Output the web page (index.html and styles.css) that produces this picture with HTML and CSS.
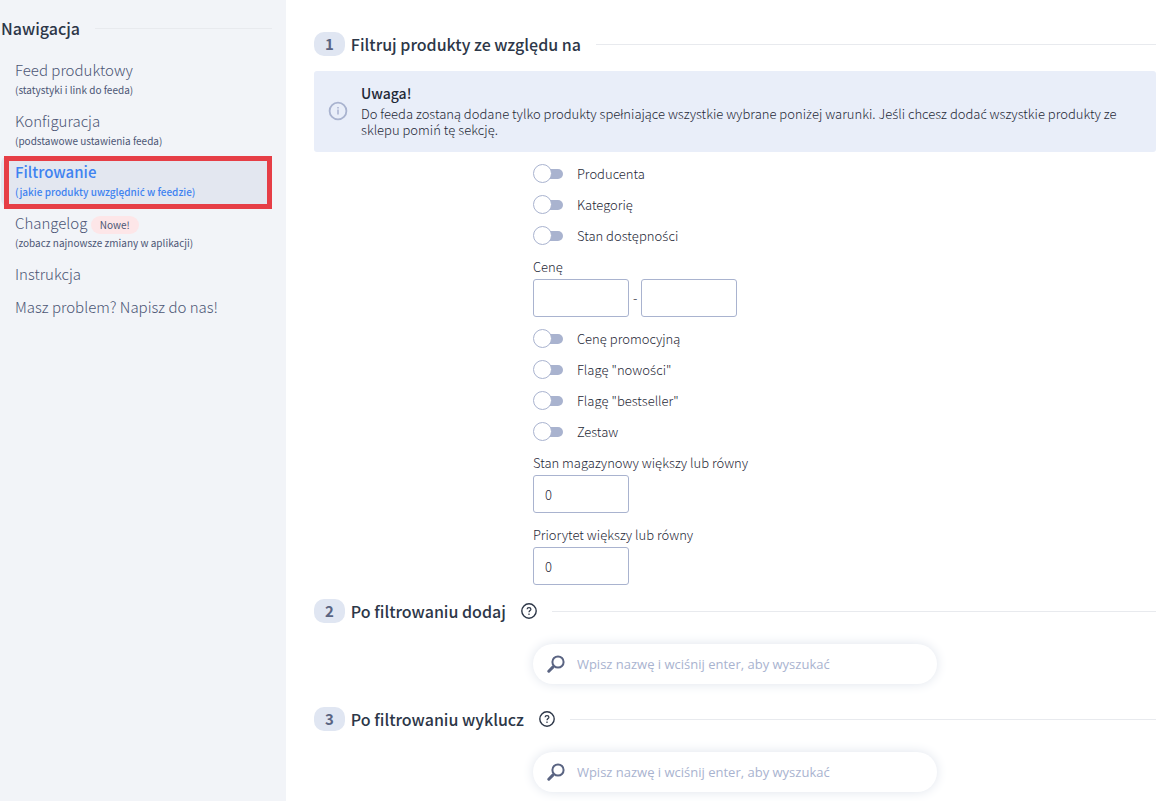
FILE: index.html
```html
<!DOCTYPE html>
<html lang="pl">
<head>
  <meta charset="utf-8">
  <title>Filtrowanie</title>
  <link rel="stylesheet" href="styles.css">
</head>
<body>
  <div class="page">
    <aside class="sidebar">
      <h2 class="nav-title">Nawigacja</h2>
      <nav class="nav">
        <a class="nav-link" href="#feed">Feed produktowy<small>(statystyki i link do feeda)</small></a>
        <a class="nav-link" href="#konfiguracja">Konfiguracja<small>(podstawowe ustawienia feeda)</small></a>
        <a class="nav-link active" href="#filtrowanie">Filtrowanie<small>(jakie produkty uwzględni<span class="pl">ć</span> w feedzie)</small></a>
        <a class="nav-link" href="#changelog">Changelog <span class="badge">Nowe!</span><small>(zobacz najnowsze zmiany w aplikacji)</small></a>
        <a class="nav-link" href="#instrukcja">Instrukcja</a>
        <a class="nav-link" href="#kontakt">Masz problem? Napisz do nas!</a>
      </nav>
    </aside>

    <main class="content">
      <h2 class="section-title"><span class="step">1</span>Filtruj produkty ze względu na</h2>

      <div class="notice">
        <svg class="notice-icon" viewBox="0 0 20 20" fill="none" stroke="currentColor">
          <circle cx="10" cy="10" r="8.4" stroke-width="1.8"/>
          <path d="M10 8.6v5M10 6v1.6" stroke-width="1.5"/>
        </svg>
        <div>
          <strong class="notice-title">Uwaga!</strong>
          <p class="notice-text">Do feeda zostaną dodane tylko produkty spełniające wszystkie wybrane poni<span class="pl">ż</span>ej warunki. Je<span class="pl">ś</span>li chcesz doda<span class="pl">ć</span> wszystkie produkty ze sklepu pomiń tę sekcję.</p>
        </div>
      </div>

      <form class="form">
        <label class="toggle"><input type="checkbox"><span>Producenta</span></label>
        <label class="toggle"><input type="checkbox"><span>Kategorię</span></label>
        <label class="toggle"><input type="checkbox"><span>Stan dostępno<span class="pl">ś</span>ci</span></label>

        <div class="field">
          <label for="price-from">Cenę</label>
          <div class="range">
            <input id="price-from" class="input" type="text">
            <span>-</span>
            <input id="price-to" class="input" type="text" aria-label="Cena do">
          </div>
        </div>

        <label class="toggle"><input type="checkbox"><span>Cenę promocyjną</span></label>
        <label class="toggle"><input type="checkbox"><span>Flagę "nowo<span class="pl">ś</span>ci"</span></label>
        <label class="toggle"><input type="checkbox"><span>Flagę "bestseller"</span></label>
        <label class="toggle"><input type="checkbox"><span>Zestaw</span></label>

        <div class="field">
          <label for="stock">Stan magazynowy większy lub równy</label>
          <input id="stock" class="input" type="text" value="0">
        </div>
        <div class="field">
          <label for="priority">Priorytet większy lub równy</label>
          <input id="priority" class="input" type="text" value="0">
        </div>
      </form>

      <h2 class="section-title">
        <span class="step">2</span>Po filtrowaniu dodaj
        <svg class="help" viewBox="0 0 16 16" fill="none" stroke="currentColor">
          <circle cx="8" cy="8" r="7.2" stroke-width="1.4"/>
          <path d="M6.1 6.2C6.1 4.1 9.9 4.1 9.9 6.2C9.9 7.5 8 7.6 8 9.3M8 10.5v1.5" stroke-width="1.2"/>
        </svg>
      </h2>
      <label class="search">
        <svg class="search-icon" viewBox="0 0 18 18" fill="none" stroke="currentColor">
          <circle cx="11" cy="7" r="5.6" stroke-width="2"/>
          <path d="M7 11l-2 2" stroke-width="2"/>
          <path d="M5.6 12.4L1.8 16.2" stroke-width="3" stroke-linecap="round"/>
        </svg>
        <input type="search" aria-label="Dodaj produkt" placeholder="Wpisz nazwę i wciśnij enter, aby wyszukać">
      </label>

      <h2 class="section-title">
        <span class="step">3</span>Po filtrowaniu wyklucz
        <svg class="help" viewBox="0 0 16 16" fill="none" stroke="currentColor">
          <circle cx="8" cy="8" r="7.2" stroke-width="1.4"/>
          <path d="M6.1 6.2C6.1 4.1 9.9 4.1 9.9 6.2C9.9 7.5 8 7.6 8 9.3M8 10.5v1.5" stroke-width="1.2"/>
        </svg>
      </h2>
      <label class="search">
        <svg class="search-icon" viewBox="0 0 18 18" fill="none" stroke="currentColor">
          <circle cx="11" cy="7" r="5.6" stroke-width="2"/>
          <path d="M7 11l-2 2" stroke-width="2"/>
          <path d="M5.6 12.4L1.8 16.2" stroke-width="3" stroke-linecap="round"/>
        </svg>
        <input type="search" aria-label="Wyklucz produkt" placeholder="Wpisz nazwę i wciśnij enter, aby wyszukać">
      </label>
    </main>
  </div>
</body>
</html>
```
FILE: styles.css
```css
* {
  box-sizing: border-box;
}

body {
  margin: 0;
  font-family: "Noto Sans CJK SC", "Noto Sans", sans-serif;
  font-size: 13px;
  font-weight: 300;
  line-height: 16px;
  color: #1f2937;
  background-color: #fff;
}

/* the main font has no proper accented form of these letters */
.pl {
  font-family: "Noto Sans", sans-serif;
}

.page {
  display: flex;
  min-height: 100vh;
}

.sidebar {
  flex: 0 0 286px;
  padding: 16px 14px 0 1px;
  background-color: #f2f4f8;
}

.nav-title,
.section-title {
  display: flex;
  align-items: center;
  margin: 0;
  font-size: 16px;
  font-weight: 500;
  line-height: 24px;
  color: #2d3748;
}

/* line that fills the rest of the heading row */
.nav-title::after,
.section-title::after {
  content: "";
  flex: 1;
  height: 1px;
  margin-left: 15px;
  background-color: #e8eaee;
}

.nav {
  margin-top: 14px;
}

.nav-link {
  display: block;
  padding: 4px 14px 5px;
  font-size: 15px;
  line-height: 24px;
  color: #4c5675;
  text-decoration: none;
}

.nav-link small {
  display: block;
  margin-bottom: 2px;
  font-size: 10px;
  font-weight: 400;
  line-height: 16px;
}

.nav-link.active {
  position: relative;
  border-radius: 8px;
  font-weight: 500;
  color: #3f83f0;
  background-color: #e3e7f0;
}

.nav-link.active small {
  font-weight: 500;
}

/* frame over the current item */
.nav-link.active::after {
  content: "";
  position: absolute;
  inset: 0 0 -2px 3px;
  border: 5px solid #e63e46;
}

.badge {
  display: inline-block;
  padding: 0 9px;
  border-radius: 10px;
  font-size: 10px;
  font-weight: 400;
  line-height: 18px;
  vertical-align: middle;
  background-color: #fde6e8;
}

.content {
  flex: 1;
  min-width: 0;
  padding: 32px 20px 8px 28px;
}

.step {
  margin-right: 6px;
  padding: 0 11px;
  border-radius: 10px;
  font-size: 15px;
  font-weight: 700;
  color: #5a6482;
  background-color: #e0e6f2;
}

.help {
  width: 16px;
  height: 16px;
  margin-left: 15px;
}

.notice {
  display: flex;
  align-items: center;
  gap: 13px;
  margin-top: 15px;
  padding: 12px 14px 14px;
  border-radius: 3px;
  background-color: #e9eef9;
}

.notice-icon {
  flex: none;
  width: 20px;
  height: 20px;
  color: #a9b3cf;
}

.notice-title {
  display: block;
  margin-bottom: 2px;
  font-size: 14px;
  font-weight: 500;
  line-height: 21px;
}

.notice-text {
  margin: 0;
}

.form {
  display: flex;
  flex-direction: column;
  margin: 6px 0 8px 26%;
}

.toggle {
  display: flex;
  align-items: center;
  gap: 14px;
  height: 31px;
}

.toggle input {
  appearance: none;
  display: flex;
  align-items: center;
  width: 30px;
  height: 17px;
  margin: 0;
}

.toggle input::before {
  content: "";
  z-index: 1;
  width: 17px;
  height: 17px;
  border: 1px solid #a9b3cf;
  border-radius: 50%;
  background-color: #fff;
}

.toggle input::after {
  content: "";
  flex: 1;
  height: 10px;
  margin-left: -4px;
  border-radius: 0 5px 5px 0;
  background-color: #a9b3cf;
}

.toggle input:checked {
  transform: rotate(180deg);
}

.field {
  display: flex;
  flex-direction: column;
  gap: 4px;
  padding: 8px 0 6px;
}

.range {
  display: flex;
  align-items: center;
  gap: 4px;
}

.input {
  width: 96px;
  height: 38px;
  padding: 0 11px;
  border: 1px solid #a9b3cf;
  border-radius: 3px;
  font: inherit;
  color: inherit;
}

.search {
  display: flex;
  align-items: center;
  gap: 12px;
  width: 48%;
  height: 40px;
  margin: 21px 0 23px 26%;
  padding: 0 14px;
  border-radius: 20px;
  box-shadow: 0 0 12px #dfe4ec;
}

.search-icon {
  flex: none;
  width: 18px;
  height: 18px;
  color: #5a6482;
}

.search input {
  flex: 1;
  min-width: 0;
  padding: 0;
  border: none;
  outline: none;
  font-family: "Open Sans", "Noto Sans", sans-serif;
  font-size: 13px;
  background: none;
}

.search input::placeholder {
  color: #a9b3cf;
}
```
